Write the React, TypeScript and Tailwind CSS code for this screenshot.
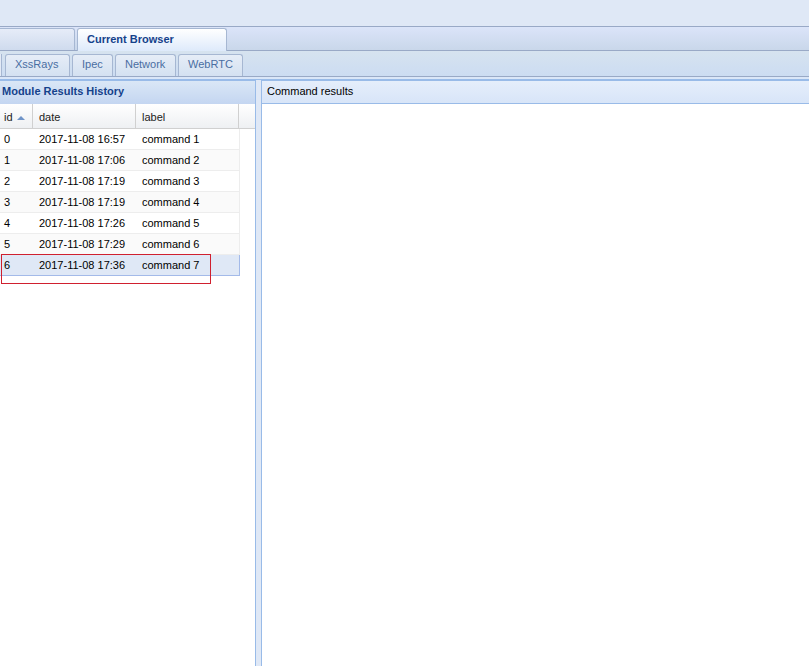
import React from 'react';

const rows = [
  { id: 0, date: '2017-11-08 16:57', label: 'command 1' },
  { id: 1, date: '2017-11-08 17:06', label: 'command 2' },
  { id: 2, date: '2017-11-08 17:19', label: 'command 3' },
  { id: 3, date: '2017-11-08 17:19', label: 'command 4' },
  { id: 4, date: '2017-11-08 17:26', label: 'command 5' },
  { id: 5, date: '2017-11-08 17:29', label: 'command 6' },
  { id: 6, date: '2017-11-08 17:36', label: 'command 7' },
];

const subTabs = [
  { name: 'XssRays', w: 'w-[65px] ml-[1px]' },
  { name: 'Ipec', w: 'w-[41px]' },
  { name: 'Network', w: 'w-[61px]' },
  { name: 'WebRTC', w: 'w-[65px]' },
];

export default function App() {
  return (
    <div
      className="w-[809px] h-[666px] overflow-hidden bg-[#dfe8f6] flex flex-col text-[11px]"
      style={{ fontFamily: '"Liberation Sans", Arial, sans-serif' }}
    >
      {/* top space */}
      <div className="h-[26px] shrink-0" />

      {/* main tab strip */}
      <div className="h-[25px] shrink-0 border-t border-b border-[#99a9c6] bg-gradient-to-b from-[#dbe4f9] to-[#c9d7ea] flex items-end gap-[2px]">
        <div className="w-[75px] h-[22px] rounded-tr-[3px] border-t border-r border-[#a6b7d2] bg-gradient-to-b from-[#e6ecf8] to-[#cfdbee]" />
        <div className="w-[150px] h-[23px] -mb-px rounded-t-[3px] border-t border-l border-r border-[#a6b7d2] bg-gradient-to-b from-[#ffffff] to-[#deeafb] flex items-center pl-[9px] pb-[2px] font-bold text-[#15428b]">
          Current Browser
        </div>
      </div>

      {/* sub tab strip */}
      <div className="h-[26px] shrink-0 border-b border-[#99a9c6] bg-gradient-to-b from-[#d6e3ef] to-[#ccdcf2] flex items-end gap-[2px]">
        <div className="w-[2px] h-[22px] border-r border-[#a6b7d2] bg-[#e3eaf6]" />
        {subTabs.map((t) => (
          <div
            key={t.name}
            className={`${t.w} h-[22px] pl-[9px] rounded-t-[3px] border-t border-l border-r border-[#a6b7d2] bg-gradient-to-b from-[#e6edf7] to-[#d4e1f1] flex items-center pb-[2px] text-[#4a6ea2]`}
          >
            {t.name}
          </div>
        ))}
      </div>

      <div className="h-[3px] shrink-0 bg-[#dae6f8] border-b border-[#99bbe8]" />

      {/* panels */}
      <div className="flex flex-1 min-h-0">
        {/* left panel */}
        <div className="w-[256px] shrink-0 flex flex-col bg-white border-r border-[#99bbe8]">
          <div className="h-[24px] shrink-0 border-t border-[#99bbe8] bg-gradient-to-b from-[#dae7f6] to-[#c4d6f1] flex items-center pl-[2px] pb-[3px] font-bold text-[#15428b]">
            Module Results History
          </div>
          <div className="h-[25px] shrink-0 flex bg-gradient-to-b from-[#ffffff] to-[#eef0f3] border-b border-[#d0d0d0] text-[#222] pt-[3px]">
            <div className="w-[33px] border-r border-[#d0d0d0] flex items-center pl-[4px] gap-[4px] -mt-[3px]">
              <span className="pt-[3px]">id</span>
              <svg width="8" height="5" viewBox="0 0 8 5" className="mt-[3px]">
                <path d="M0 5 L4 1 L8 5 Z" fill="#6f94c8" />
              </svg>
            </div>
            <div className="w-[103px] border-r border-[#d0d0d0] flex items-center pl-[6px] -mt-[3px] pt-[3px]">date</div>
            <div className="w-[103px] border-r border-[#d0d0d0] flex items-center pl-[6px] -mt-[3px] pt-[3px]">label</div>
            <div className="flex-1" />
          </div>
          <div className="relative">
            {rows.map((r, i) => (
              <div
                key={r.id}
                className={`w-[240px] h-[21px] flex items-center border-b border-r text-[#000] ${
                  r.id === 6
                    ? 'bg-[#dfe8f6] border-[#a3bae9]'
                    : i % 2 === 1
                    ? 'bg-[#fafafa] border-[#ededed]'
                    : 'bg-white border-[#ededed]'
                }`}
              >
                <div className="w-[33px] pl-[4px]">{r.id}</div>
                <div className="w-[103px] pl-[6px]">{r.date}</div>
                <div className="w-[103px] pl-[6px]">{r.label}</div>
              </div>
            ))}
            <div className="absolute left-[1px] top-[125px] w-[210px] h-[30px] border border-[#d0202f]" />
          </div>
        </div>

        {/* splitter */}
        <div className="w-[6px] shrink-0 bg-[#dfe8f6] border-r border-[#99bbe8]" />

        {/* right panel */}
        <div className="flex-1 flex flex-col bg-white">
          <div className="h-[24px] shrink-0 border-t border-b border-[#99bbe8] bg-gradient-to-b from-[#e5eefb] to-[#d8e5f8] flex items-center pl-[5px] pb-[1px] text-[#000]">
            Command results
          </div>
          <div className="flex-1" />
        </div>
      </div>
    </div>
  );
}
